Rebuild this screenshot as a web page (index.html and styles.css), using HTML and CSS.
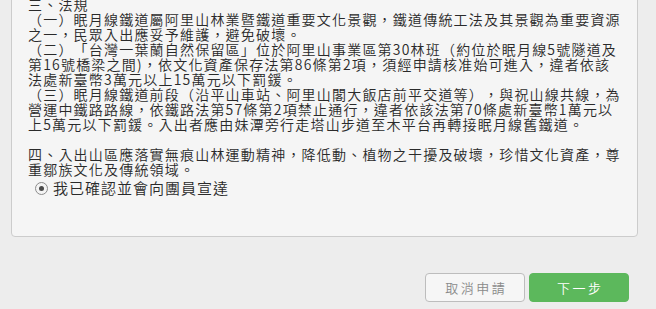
FILE: index.html
```html
<!DOCTYPE html>
<html lang="zh-Hant">
<head>
<meta charset="utf-8">
<title>眠月線入山申請</title>
<link rel="stylesheet" href="styles.css">
</head>
<body>
<div class="page">
  <section class="panel">
    <div class="rules">
      <div class="block">
        <p>三、法規</p>
        <p>（一）眠月線鐵道屬阿里山林業暨鐵道重要文化景觀，鐵道傳統工法及其景觀為重要資源<br>之一，民眾入出應妥予維護，避免破壞。</p>
        <p>（二）「台灣一葉蘭自然保留區」位於阿里山事業區第30林班（約位於眠月線5號隧道及<br>第16號橋梁之間)，依文化資產保存法第86條第2項，須經申請核准始可進入，違者依該<br>法處新臺幣3萬元以上15萬元以下罰鍰。</p>
        <p>（三）眠月線鐵道前段（沿平山車站、阿里山閣大飯店前平交道等），與祝山線共線，為<br>營運中鐵路路線，依鐵路法第57條第2項禁止通行，違者依該法第70條處新臺幣1萬元以<br>上5萬元以下罰鍰。入出者應由妹潭旁行走塔山步道至木平台再轉接眠月線舊鐵道。</p>
      </div>
      <div class="block">
        <p>四、入出山區應落實無痕山林運動精神，降低動、植物之干擾及破壞，珍惜文化資產，尊<br>重鄒族文化及傳統領域。</p>
      </div>
    </div>
    <label class="confirm">
      <input type="radio" name="confirm" checked>
      <span>我已確認並會向團員宣達</span>
    </label>
  </section>
  <div class="actions">
    <button class="btn btn-cancel" type="button">取消申請</button>
    <button class="btn btn-next" type="button">下一步</button>
  </div>
</div>
</body>
</html>
```
FILE: styles.css
```css
html, body {
  margin: 0;
  padding: 0;
  background: #ededed;
  overflow: hidden;
}

body {
  font-family: "Noto Sans CJK TC", "Noto Sans", sans-serif;
  color: #2a2a2a;
}

.page {
  display: flex;
  flex-direction: column;
}

.panel {
  margin: -20px 18px 0 11px;
  padding: 16px 12px 37px 16px;
  background: #f5f5f5;
  border: 1px solid #cccccc;
  border-radius: 4px;
}

.rules {
  font-size: 14px;
  line-height: 15px;
  letter-spacing: 1.2px;
  font-weight: 350;
  text-spacing-trim: space-all;
  font-feature-settings: "halt" 0, "palt" 0, "chws" 0;
}

.rules p {
  margin: 0;
  white-space: nowrap;
}

.block + .block {
  margin-top: 15px;
}

.confirm {
  display: flex;
  align-items: center;
  gap: 5px;
  height: 22px;
  padding-left: 7px;
  font-size: 15px;
  letter-spacing: 1px;
  font-weight: 350;
  line-height: 22px;
}

.confirm input {
  appearance: none;
  -webkit-appearance: none;
  margin: 0;
  width: 13px;
  height: 13px;
  border: 1px solid #8c8c8c;
  border-radius: 50%;
  background: #f4f4f4;
  box-sizing: border-box;
  display: grid;
  place-items: center;
}

.confirm input:checked::before {
  content: "";
  width: 5px;
  height: 5px;
  border-radius: 50%;
  background: #4a4a4a;
}

.actions {
  display: flex;
  justify-content: flex-end;
  gap: 4px;
  margin-top: 36px;
  padding-right: 27px;
}

.btn {
  width: 100px;
  height: 29px;
  border-radius: 4px;
  font-family: "Noto Sans CJK TC", "Noto Sans", sans-serif;
  font-size: 13px;
  font-weight: 350;
  letter-spacing: 2.5px;
  padding: 0 0 0 2.5px;
  cursor: pointer;
}

.btn-cancel {
  background: #f6f6f6;
  border: 1px solid #bdbdbd;
  color: #8a8a8a;
}

.btn-next {
  background: #5cb85c;
  border: 1px solid #5cb85c;
  color: #ffffff;
}
```
